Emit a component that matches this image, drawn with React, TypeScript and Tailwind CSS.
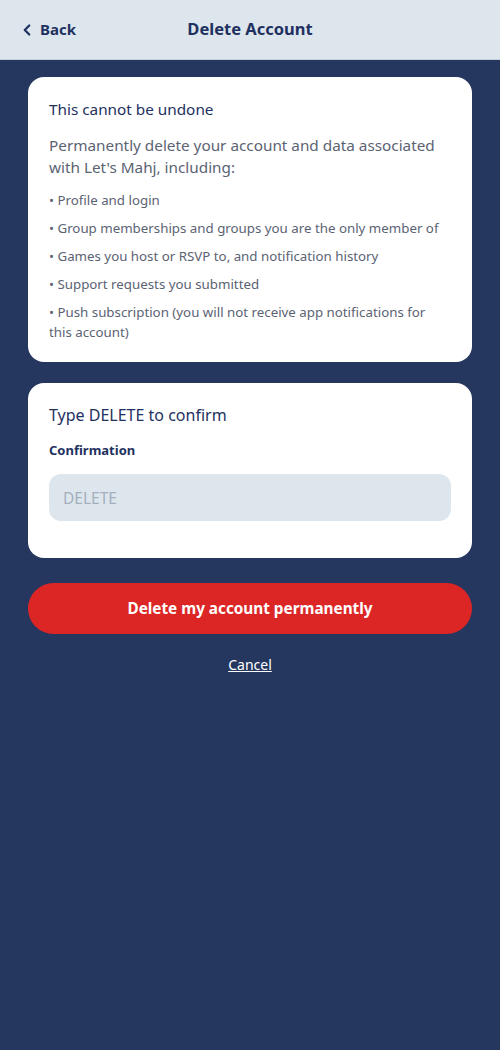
import { ChevronLeft } from "lucide-react";

const items = [
  "Profile and login",
  "Group memberships and groups you are the only member of",
  "Games you host or RSVP to, and notification history",
  "Support requests you submitted",
  "Push subscription (you will not receive app notifications for this account)",
];

export default function App() {
  return (
    <div className="min-h-[1050px] w-full bg-[#25375f] font-['Noto_Sans',sans-serif]">
      <header className="h-[60px] bg-[#dee6ed] border-b border-[#c5cfd9] flex items-center relative">
        <button className="flex items-center gap-[4px] pl-[18px] text-[#1e3160] font-bold text-[15px]">
          <ChevronLeft className="h-[18px] w-[18px]" strokeWidth={3} />
          Back
        </button>
        <h1 className="absolute left-0 right-0 text-center pointer-events-none text-[16.5px] font-bold text-[#1e3160]">
          Delete Account
        </h1>
      </header>

      <main className="px-[28px] pt-[17px] flex flex-col">
        <section className="bg-white rounded-[16px] px-[21px] pt-[21px] pb-[20px]">
          <h2 className="text-[15.3px] text-[#1e3160] leading-[22px]">This cannot be undone</h2>
          <p className="mt-[14px] text-[15.3px] text-[#5b6373] leading-[22px]">
            Permanently delete your account and data associated with Let's Mahj, including:
          </p>
          <ul className="mt-[12px] flex flex-col gap-[8px]">
            {items.map((item) => (
              <li key={item} className="text-[13.3px] text-[#5b6373] leading-[20px] pr-[4px]">
                {"• " + item}
              </li>
            ))}
          </ul>
        </section>

        <section className="mt-[21px] bg-white rounded-[16px] px-[21px] pt-[20px] pb-[37px]">
          <h2 className="text-[16px] text-[#1e3160] leading-[24px]">Type DELETE to confirm</h2>
          <label className="block mt-[13px] text-[13px] font-bold text-[#1e3160] leading-[20px]">Confirmation</label>
          <input
            placeholder="DELETE"
            className="mt-[14px] w-full h-[47px] rounded-[12px] bg-[#dee6ed] px-[14px] text-[15.5px] text-[#1e3160] placeholder:text-[#a3afbd] outline-none"
          />
        </section>

        <button className="mt-[25px] h-[51px] rounded-full bg-[#dc2626] text-white font-bold text-[15.3px]">
          Delete my account permanently
        </button>
        <button className="mt-[20px] self-center text-white text-[14px] underline">Cancel</button>
      </main>
    </div>
  );
}
